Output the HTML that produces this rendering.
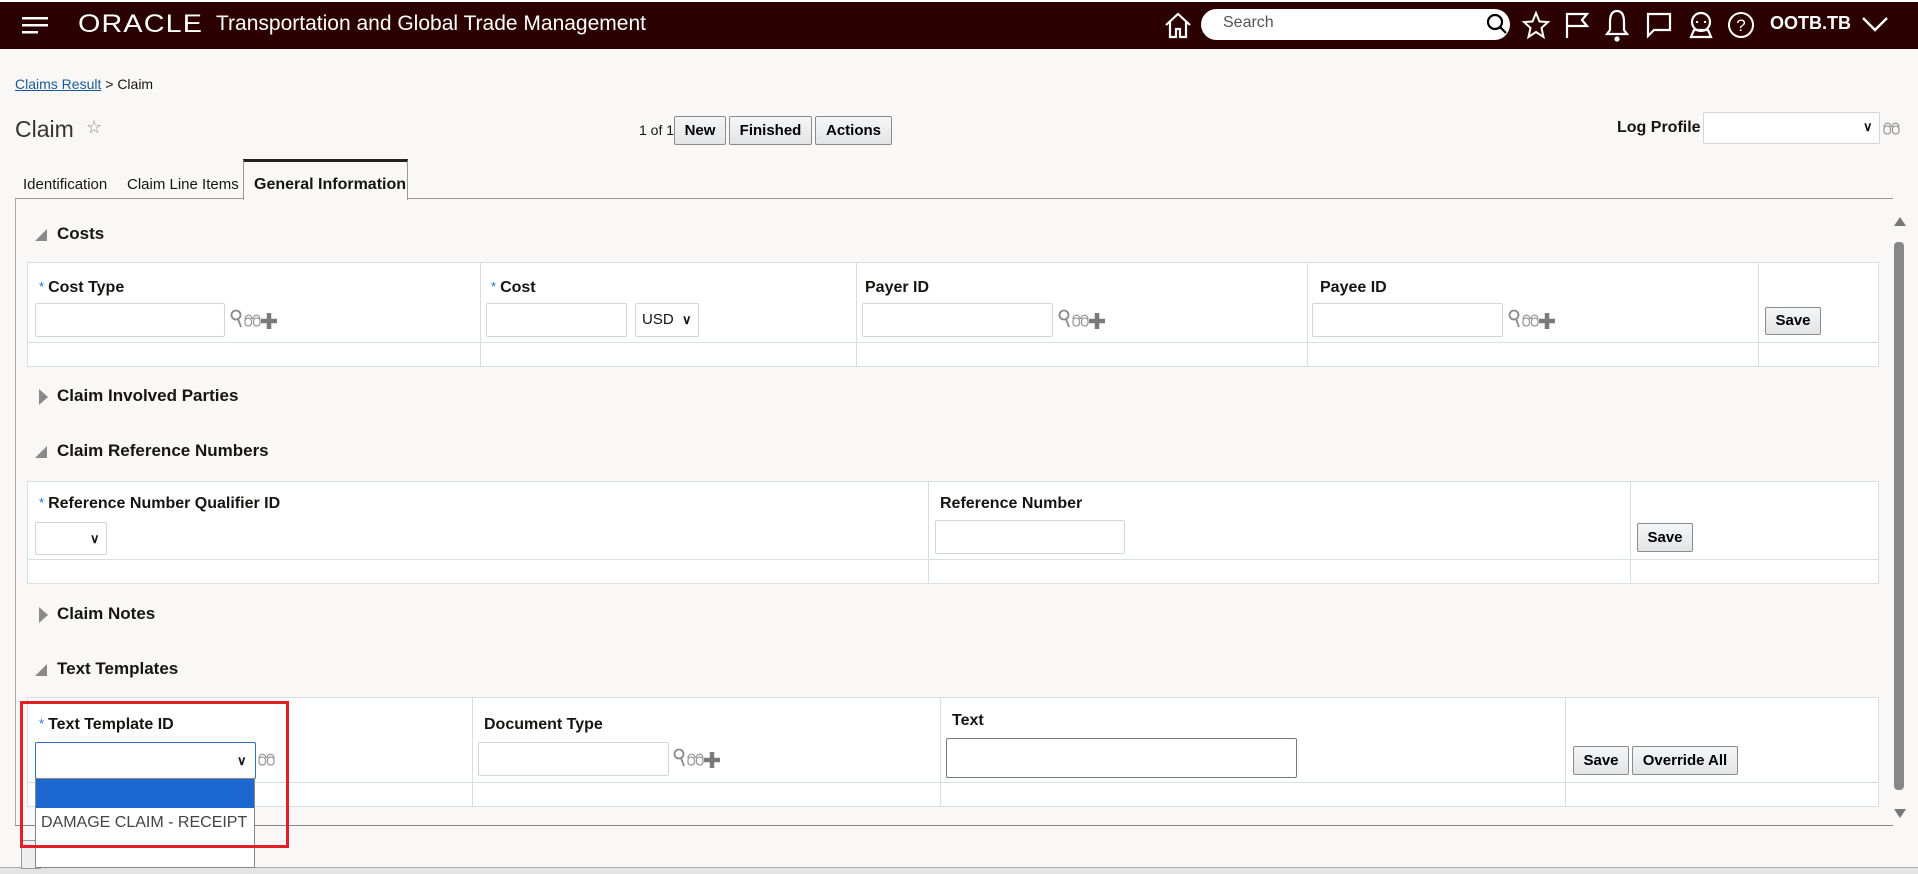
<!DOCTYPE html>
<html><head><meta charset="utf-8">
<style>
*{box-sizing:border-box;margin:0;padding:0}
body{width:1918px;height:874px;background:#f9f8f6;font-family:"Liberation Sans Narrow","Liberation Sans",sans-serif;color:#161513;position:relative;overflow:hidden;font-size:15px}
.a{position:absolute}
.hdr{left:0;top:0;width:1918px;height:49px;background:#2b0000;border-top:2px solid #fff}
.w{color:#fff}
.btn{position:absolute;background:linear-gradient(#f5f6f7,#e2e4e6);border:1px solid #8b8b8b;border-radius:2px;font-weight:bold;font-size:15px;text-align:center;color:#000}
.inp{position:absolute;background:#fff;border:1px solid #d4d4d4;border-radius:2px}
.tbl{position:absolute;background:#fff;border:1px solid #d6dfe6}
.vl{position:absolute;top:0;bottom:0;width:1px;background:#d6dfe6}
.hl{position:absolute;left:0;right:0;height:1px;background:#d6dfe6}
.lbl{position:absolute;font-size:16px;font-weight:bold}
.lbl b{color:#1a6fd5;font-weight:normal;font-size:13px;vertical-align:top;margin-right:4px}
.sec{position:absolute;font-size:17px;font-weight:bold;left:57px}
.tri{position:absolute;left:35px;width:0;height:0}
.down{border-left:12px solid transparent;border-bottom:12px solid #8a8a8a}
.right{border-top:8px solid transparent;border-bottom:8px solid transparent;border-left:9px solid #8a8a8a;left:39px}
.chev{position:absolute;font-size:13px;font-weight:bold}
</style></head><body>
<svg width="0" height="0" style="position:absolute"><defs>
<g id="ic" fill="none">
<circle cx="6" cy="7" r="4.5" stroke="#8a8a8a" stroke-width="1.8"/><path d="M8 11 L11 19" stroke="#8a8a8a" stroke-width="1.8"/>
<path d="M15 11 C15 6 22 6 22 11 M23 11 C23 6 30 6 30 11" stroke="#9a9a9a" stroke-width="1.3"/>
<rect x="15" y="10" width="6.5" height="8" rx="3" stroke="#9a9a9a" stroke-width="1.3"/><rect x="23.5" y="10" width="6.5" height="8" rx="3" stroke="#9a9a9a" stroke-width="1.3"/>
<path d="M39 5 V21 M31 13 H47" stroke="#7a7a7a" stroke-width="4.5"/>
</g>
<g id="gl" fill="none" stroke="#9a9a9a" stroke-width="1.3">
<path d="M1 6 C1 1 8 1 8 6 M9 6 C9 1 16 1 16 6"/><rect x="1" y="5" width="6.5" height="8" rx="3"/><rect x="9.5" y="5" width="6.5" height="8" rx="3"/>
</g></defs></svg>
<div class="a hdr"></div>
<svg class="a" style="left:22px;top:17px" width="28" height="18"><rect y="0" width="26" height="2.5" fill="#fff"/><rect y="7" width="26" height="2.5" fill="#fff"/><rect y="14" width="16" height="2.5" fill="#fff"/></svg>
<div class="a w" style="left:78px;top:10px;font-family:'Liberation Sans',sans-serif;font-size:25px;letter-spacing:1px;transform:scaleX(1.15);transform-origin:left">ORACLE</div>
<div class="a w" style="left:216px;top:12px;font-family:'Liberation Sans',sans-serif;font-size:21px">Transportation and Global Trade Management</div>
<svg class="a" style="left:1163px;top:10px" width="30" height="30" fill="none" stroke="#fff" stroke-width="2.2"><path d="M3 15 L15 4 L27 15 M7 12 V27 H13 V19 H17 V27 H23 V12"/></svg>
<div class="a" style="left:1201px;top:9px;width:309px;height:31px;background:#fff;border-radius:16px"></div>
<div class="a" style="left:1223px;top:14px;color:#555;font-size:16px">Search</div>
<svg class="a" style="left:1485px;top:12px" width="24" height="24" fill="none" stroke="#000" stroke-width="2.2"><circle cx="10" cy="10" r="7"/><path d="M15 15 L21 21"/></svg>
<svg class="a" style="left:1522px;top:11px" width="28" height="28" fill="none" stroke="#fff" stroke-width="2"><path d="M14 2 L17.5 10.5 L26 11 L19.5 17 L21.5 26 L14 21 L6.5 26 L8.5 17 L2 11 L10.5 10.5 Z"/></svg>
<svg class="a" style="left:1563px;top:11px" width="28" height="28" fill="none" stroke="#fff" stroke-width="2.2"><path d="M4 27 V3 H24 L19 9 L24 15 H4"/></svg>
<svg class="a" style="left:1603px;top:8px" width="28" height="34" fill="none" stroke="#fff" stroke-width="2.2"><path d="M14 3 C8 3 7 9 7 14 V22 L4 26 H24 L21 22 V14 C21 9 20 3 14 3"/><circle cx="14" cy="31" r="1.5" fill="#fff"/></svg>
<svg class="a" style="left:1645px;top:11px" width="28" height="28" fill="none" stroke="#fff" stroke-width="2.2"><path d="M3 3 H25 V19 H9 L3 25 Z"/></svg>
<svg class="a" style="left:1686px;top:9px" width="30" height="32" fill="none" stroke="#fff" stroke-width="2.2"><circle cx="15" cy="13" r="9"/><path d="M11 12 V14 M19 12 V14 M5 28 H25 L22 21 H8 Z"/></svg>
<svg class="a" style="left:1726px;top:10px" width="30" height="30" fill="none" stroke="#fff" stroke-width="2"><circle cx="15" cy="15" r="12"/><text x="15" y="21" text-anchor="middle" fill="#fff" stroke="none" font-size="17" font-family="Liberation Sans">?</text></svg>
<div class="a w" style="left:1770px;top:13px;font-family:'Liberation Sans',sans-serif;font-weight:bold;font-size:18px">OOTB.TB</div>
<svg class="a" style="left:1860px;top:14px" width="30" height="20" fill="none" stroke="#fff" stroke-width="2.4"><path d="M3 4 L15 16 L27 4"/></svg>

<div class="a" style="left:15px;top:76px;font-size:14px"><span style="color:#1a5a9a;text-decoration:underline">Claims Result</span> &gt; Claim</div>
<div class="a" style="left:15px;top:116px;font-size:23px;color:#333">Claim</div>
<div class="a" style="left:86px;top:117px;font-size:18px;color:#888">☆</div>
<div class="a" style="left:639px;top:122px;font-size:14px">1 of 1</div>
<div class="btn" style="left:674px;top:116px;width:52px;height:29px;line-height:27px">New</div>
<div class="btn" style="left:729px;top:116px;width:83px;height:29px;line-height:27px">Finished</div>
<div class="btn" style="left:815px;top:116px;width:77px;height:29px;line-height:27px">Actions</div>
<div class="a" style="left:1617px;top:119px;font-size:16px;font-weight:bold">Log Profile</div>
<div class="inp" style="left:1703px;top:112px;width:177px;height:32px"></div>
<div class="chev" style="left:1863px;top:119px">&#x2228;</div>
<svg class="a" style="left:1883px;top:121px" width="18" height="15"><use href="#gl"/></svg>

<div class="a" style="left:15px;top:198px;width:1878px;height:1px;background:#999"></div>
<div class="a" style="left:23px;top:176px;font-size:15px">Identification</div>
<div class="a" style="left:127px;top:176px;font-size:15px">Claim Line Items</div>
<div class="a" style="left:243px;top:159px;width:165px;height:41px;background:#f9f8f6;border:1px solid #999;border-top:3px solid #222;border-bottom:none"></div>
<div class="a" style="left:254px;top:176px;font-size:16px;font-weight:bold">General Information</div>

<div class="a" style="left:15px;top:199px;width:1px;height:627px;background:#aaa"></div>
<div class="a" style="left:15px;top:825px;width:1878px;height:1px;background:#888"></div>
<div class="a" style="left:1894px;top:242px;width:10px;height:548px;background:#888;border-radius:4px"></div>
<div class="a" style="left:1894px;top:217px;border-left:6px solid transparent;border-right:6px solid transparent;border-bottom:9px solid #777"></div>
<div class="a" style="left:1894px;top:809px;border-left:6px solid transparent;border-right:6px solid transparent;border-top:9px solid #777"></div>

<div class="tri down" style="top:229px"></div><div class="sec" style="top:224px">Costs</div>
<div class="tbl" style="left:27px;top:262px;width:1852px;height:105px">
<div class="hl" style="top:79px"></div>
<div class="vl" style="left:452px"></div><div class="vl" style="left:828px"></div><div class="vl" style="left:1279px"></div><div class="vl" style="left:1730px"></div>
</div>
<div class="lbl" style="left:39px;top:279px"><b>*</b>Cost Type</div>
<div class="inp" style="left:35px;top:303px;width:190px;height:34px"></div>
<svg class="a" style="left:230px;top:308px" width="48" height="22"><use href="#ic"/></svg>
<div class="lbl" style="left:491px;top:279px"><b>*</b>Cost</div>
<div class="inp" style="left:486px;top:303px;width:141px;height:34px"></div>
<div class="inp" style="left:635px;top:303px;width:64px;height:34px"></div>
<div class="a" style="left:642px;top:311px;font-size:15px">USD</div><div class="chev" style="left:682px;top:312px">&#x2228;</div>
<div class="lbl" style="left:865px;top:279px">Payer ID</div>
<div class="inp" style="left:862px;top:303px;width:191px;height:34px"></div>
<svg class="a" style="left:1058px;top:308px" width="48" height="22"><use href="#ic"/></svg>
<div class="lbl" style="left:1320px;top:279px">Payee ID</div>
<div class="inp" style="left:1312px;top:303px;width:191px;height:34px"></div>
<svg class="a" style="left:1508px;top:308px" width="48" height="22"><use href="#ic"/></svg>
<div class="btn" style="left:1765px;top:307px;width:56px;height:28px;line-height:26px">Save</div>

<div class="tri right" style="top:389px"></div><div class="sec" style="top:386px">Claim Involved Parties</div>

<div class="tri down" style="top:446px"></div><div class="sec" style="top:441px">Claim Reference Numbers</div>
<div class="tbl" style="left:27px;top:481px;width:1852px;height:103px">
<div class="hl" style="top:77px"></div>
<div class="vl" style="left:900px"></div><div class="vl" style="left:1602px"></div>
</div>
<div class="lbl" style="left:39px;top:495px"><b>*</b>Reference Number Qualifier ID</div>
<div class="inp" style="left:35px;top:522px;width:72px;height:33px"></div><div class="chev" style="left:90px;top:531px">&#x2228;</div>
<div class="lbl" style="left:940px;top:495px">Reference Number</div>
<div class="inp" style="left:935px;top:520px;width:190px;height:34px"></div>
<div class="btn" style="left:1637px;top:523px;width:56px;height:29px;line-height:27px">Save</div>

<div class="tri right" style="top:607px"></div><div class="sec" style="top:604px">Claim Notes</div>
<div class="tri down" style="top:664px"></div><div class="sec" style="top:659px">Text Templates</div>
<div class="tbl" style="left:27px;top:697px;width:1852px;height:110px">
<div class="hl" style="top:84px"></div>
<div class="vl" style="left:444px"></div><div class="vl" style="left:912px"></div><div class="vl" style="left:1537px"></div>
</div>
<div class="lbl" style="left:39px;top:716px"><b>*</b>Text Template ID</div>
<div class="a" style="left:35px;top:742px;width:221px;height:37px;background:#fff;border:1px solid #2d6fc0;border-radius:2px"></div>
<div class="chev" style="left:237px;top:753px">&#x2228;</div>
<svg class="a" style="left:258px;top:752px" width="18" height="15"><use href="#gl"/></svg>
<div class="lbl" style="left:484px;top:716px">Document Type</div>
<div class="inp" style="left:478px;top:742px;width:191px;height:34px"></div>
<svg class="a" style="left:673px;top:747px" width="48" height="22"><use href="#ic"/></svg>
<div class="lbl" style="left:952px;top:712px">Text</div>
<div class="a" style="left:946px;top:738px;width:351px;height:40px;background:#fff;border:1px solid #777;border-radius:2px"></div>
<div class="btn" style="left:1573px;top:746px;width:56px;height:29px;line-height:27px">Save</div>
<div class="btn" style="left:1632px;top:746px;width:106px;height:29px;line-height:27px">Override All</div>

<div class="a" style="left:0;top:867px;width:1918px;height:7px;background:#e4e4e4;border-top:1px solid #aaa"></div>
<div class="a" style="left:21px;top:840px;width:20px;height:29px;border:1px solid #999;background:#eee"></div>
<div class="a" style="left:35px;top:778px;width:220px;height:90px;background:#fff;border:1px solid #888"></div>
<div class="a" style="left:36px;top:779px;width:218px;height:29px;background:#1c68d0"></div>
<div class="a" style="left:41px;top:814px;font-size:16px;color:#444">DAMAGE CLAIM - RECEIPT</div>
<div class="a" style="left:20px;top:701px;width:269px;height:147px;border:3px solid #e41e26"></div>
</body></html>
